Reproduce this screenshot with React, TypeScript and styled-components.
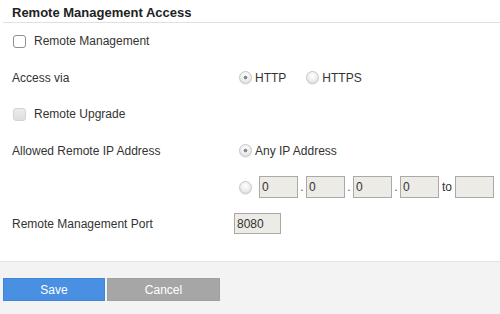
import React, { useState } from "react";
import styled, { createGlobalStyle } from "styled-components";

const GlobalStyle = createGlobalStyle`
  html, body {
    margin: 0;
    padding: 0;
    background: #ffffff;
  }
  body {
    font-family: "Liberation Sans", Arial, sans-serif;
    font-size: 12px;
    color: #333333;
  }
`;

const App: React.FC = () => {
  const [remote, setRemote] = useState(false);
  const [proto, setProto] = useState<"http" | "https">("http");
  const [ipMode, setIpMode] = useState<"any" | "range">("any");
  const [port, setPort] = useState("8080");

  return (
    <Page>
      <GlobalStyle />
      <Content>
        <Title>Remote Management Access</Title>

        <Row>
          <CheckLabel>
            <CheckBox
              type="checkbox"
              checked={remote}
              onChange={(e) => setRemote(e.target.checked)}
            />
            Remote Management
          </CheckLabel>
        </Row>

        <Row>
          <FieldLabel>Access via</FieldLabel>
          <Value>
            <RadioOption>
              <Radio
                type="radio"
                name="proto"
                checked={proto === "http"}
                onChange={() => setProto("http")}
              />
              HTTP
            </RadioOption>
            <RadioOption>
              <Radio
                type="radio"
                name="proto"
                checked={proto === "https"}
                onChange={() => setProto("https")}
              />
              HTTPS
            </RadioOption>
          </Value>
        </Row>

        <Row>
          <CheckLabel>
            <CheckBox type="checkbox" disabled />
            Remote Upgrade
          </CheckLabel>
        </Row>

        <Row>
          <FieldLabel>Allowed Remote IP Address</FieldLabel>
          <Value>
            <RadioOption>
              <Radio
                type="radio"
                name="ip"
                checked={ipMode === "any"}
                onChange={() => setIpMode("any")}
              />
              Any IP Address
            </RadioOption>
          </Value>
        </Row>

        <Row>
          <FieldLabel />
          <Value>
            <Radio
              type="radio"
              name="ip"
              checked={ipMode === "range"}
              onChange={() => setIpMode("range")}
            />
            <IpBox defaultValue="0" $first />
            <Sep>.</Sep>
            <IpBox defaultValue="0" />
            <Sep>.</Sep>
            <IpBox defaultValue="0" />
            <Sep>.</Sep>
            <IpBox defaultValue="0" />
            <ToText>to</ToText>
            <IpBox defaultValue="" />
          </Value>
        </Row>

        <Row>
          <FieldLabel>Remote Management Port</FieldLabel>
          <Value $flush>
            <PortInput value={port} onChange={(e) => setPort(e.target.value)} />
          </Value>
        </Row>
      </Content>

      <Footer>
        <ActionButton $variant="primary">Save</ActionButton>
        <ActionButton $variant="secondary">Cancel</ActionButton>
      </Footer>
    </Page>
  );
};

const Page = styled.div`
  width: 500px;
  height: 314px;
  display: flex;
  flex-direction: column;
  overflow: hidden;
`;

const Content = styled.div`
  padding-left: 3px;
  display: flex;
  flex-direction: column;
`;

const Title = styled.div`
  font-size: 13px;
  font-weight: bold;
  line-height: 15px;
  padding: 5px 0 2px 9px;
  border-bottom: 1px solid #dce1e8;
  color: #222222;
`;

const Row = styled.div`
  height: 36.5px;
  display: flex;
  align-items: center;
`;

const FieldLabel = styled.div`
  width: 222px;
  padding-left: 9px;
  flex: none;
`;

const Value = styled.div<{ $flush?: boolean }>`
  display: flex;
  align-items: center;
  padding-left: ${(p) => (p.$flush ? 0 : 5)}px;
`;

const CheckLabel = styled.label`
  display: flex;
  align-items: center;
  padding-left: 10px;
`;

const CheckBox = styled.input`
  appearance: none;
  width: 13px;
  height: 13px;
  margin: 0 8px 0 0;
  border-radius: 3px;
  border: 1px solid #8f8f8f;
  background: #ffffff;
  box-sizing: border-box;

  &:disabled {
    border-color: #d4d4d4;
    background: linear-gradient(#ececec, #dedede);
  }

  &:checked {
    background: #4a90e2;
    border-color: #3d83d6;
  }
`;

const RadioOption = styled.label`
  display: flex;
  align-items: center;
  margin-right: 20px;
`;

const Radio = styled.input`
  appearance: none;
  width: 13px;
  height: 13px;
  margin: 0 3px 0 0;
  border-radius: 50%;
  border: 1px solid #c6c6c6;
  box-sizing: border-box;
  background: radial-gradient(circle at 50% 35%, #ffffff 0%, #f0f0f0 45%, #d9d9d9 100%);
  box-shadow: 0 1px 1px rgba(0, 0, 0, 0.08);

  &:checked {
    background:
      radial-gradient(circle, #8a8a8a 0 1.7px, transparent 2.2px),
      radial-gradient(circle at 50% 35%, #ffffff 0%, #f0f0f0 45%, #d9d9d9 100%);
  }
`;

const TextBox = styled.input`
  box-sizing: border-box;
  height: 22px;
  border: 1px solid #a9a9a9;
  background: #ecebe6;
  padding: 0 2px;
  font-family: "Liberation Sans", Arial, sans-serif;
  font-size: 12px;
  color: #333333;
  outline: none;
`;

const IpBox = styled(TextBox)<{ $first?: boolean }>`
  width: 39px;
  margin-left: ${(p) => (p.$first ? 4 : 0)}px;
`;

const PortInput = styled(TextBox)`
  width: 47px;
  height: 21px;
`;

const Sep = styled.span`
  width: 8px;
  text-align: center;
  color: #555555;
`;

const ToText = styled.span`
  margin: 0 3px;
`;

const Footer = styled.div`
  margin-top: auto;
  height: 53px;
  box-sizing: border-box;
  border-top: 1px solid #e3e3e3;
  background: #f3f3f3;
  padding: 16px 0 0 3px;
  display: flex;
  align-items: flex-start;
  gap: 2px;
`;

const ActionButton = styled.button<{ $variant: "primary" | "secondary" }>`
  height: 23px;
  width: ${(p) => (p.$variant === "primary" ? 102 : 113)}px;
  border: 1px solid ${(p) => (p.$variant === "primary" ? "#3f86da" : "#a0a0a0")};
  background: ${(p) => (p.$variant === "primary" ? "#4a90e2" : "#a6a6a6")};
  color: #ffffff;
  font-family: "Liberation Sans", Arial, sans-serif;
  font-size: 12px;
  padding: 0;
  cursor: pointer;
`;

export default App;
